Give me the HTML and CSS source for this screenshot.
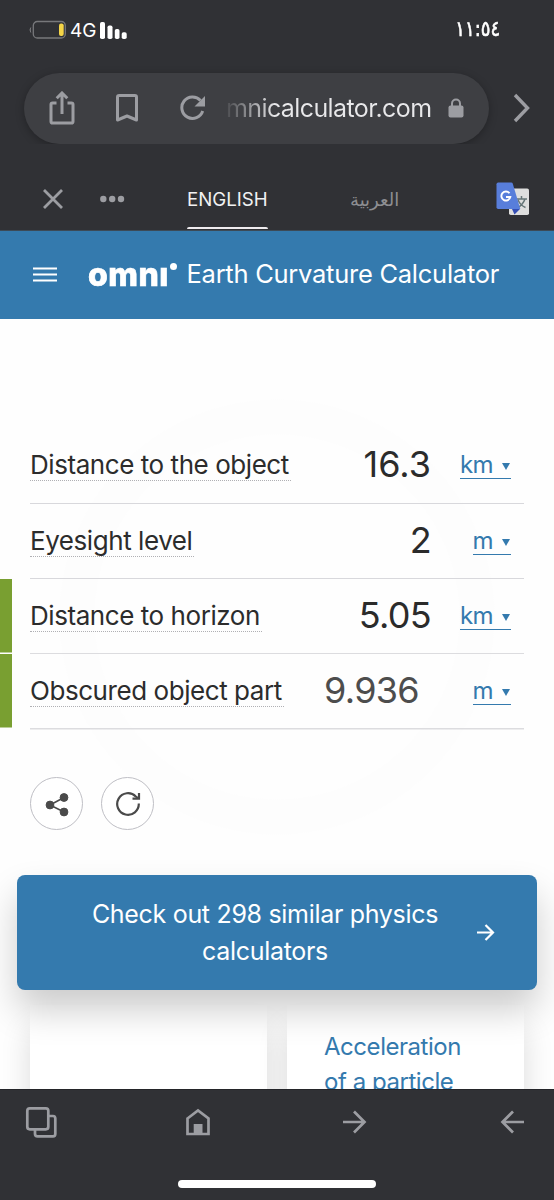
FILE: index.html
```html
<!DOCTYPE html>
<html lang="en">
<head>
<meta charset="utf-8">
<title>Earth Curvature Calculator</title>
<link rel="stylesheet" href="styles.css">
</head>
<body>
<div class="status">
  <svg class="battery" width="38" height="20" viewBox="0 0 38 20"><path d="M1.8 7.5Q.2 9.700 1.800 12.500" fill="#77787b" stroke="#77787b"/><rect x="4.300" y="1.500" width="32" height="16.500" rx="4" fill="none" stroke="#77787b" stroke-width="1.300"/><rect x="30" y="3.500" width="4.700" height="12.500" rx="2" fill="#f5d547"/></svg>
  <span class="network">4G</span>
  <svg class="signal" width="27" height="18" viewBox="0 0 27 18" fill="#fff"><rect x="0" y="0" width="5" height="17" rx="1.800"/><rect x="7.500" y="3.500" width="5" height="13.500" rx="1.800"/><rect x="14.800" y="7" width="4.700" height="10" rx="1.800"/><rect x="21.700" y="10.300" width="5" height="6.700" rx="1.800"/></svg>
  <span class="time" dir="ltr">١١:٥٤</span>
</div>
<div class="toolbar">
  <div class="pill">
    <svg class="share" width="26" height="34" viewBox="0 0 26 34" fill="none" stroke="#9c9da2" stroke-width="3"><path d="M7.500 12H3.600Q2 12 2 13.600V30.400Q2 32 3.600 32H22.400Q24 32 24 30.400V13.600Q24 12 22.400 12H18.500M13 23V3M7.700 7.300L13 2L18.300 7.300"/></svg>
    <svg class="bookmark" width="24" height="30" viewBox="0 0 24 30" fill="none" stroke="#9c9da2" stroke-width="3" stroke-linejoin="round"><path d="M2.500 27V4.200Q2.500 2.500 4.200 2.500H19.800Q21.500 2.500 21.500 4.200V27L12 23Z"/></svg>
    <svg class="reload" width="26" height="26" viewBox="0 0 26 26"><path d="M22.700 16A10.700 10.700 0 1 1 20.500 5.500" fill="none" stroke="#9c9da2" stroke-width="3"/><path d="M25 1V11.500H14.500Z" fill="#9c9da2"/></svg>
    <span class="url">mnicalculator.com</span>
    <svg class="lock" width="16" height="20" viewBox="0 0 16 20"><rect x=".5" y="7.500" width="15" height="12" rx="2" fill="#9c9da2"/><path d="M4 9V5.500a4 4 0 0 1 8 0V9" fill="none" stroke="#9c9da2" stroke-width="2"/></svg>
  </div>
  <svg class="chevron" width="20" height="32" viewBox="0 0 20 32" fill="none" stroke="#9c9da2" stroke-width="3.400"><path d="M3 3L15.500 16L3 29"/></svg>
</div>
<div class="translate">
  <svg class="close" width="22" height="22" viewBox="0 0 22 22" stroke="#9c9da2" stroke-width="2.800"><path d="M2 2L20 20M20 2L2 20"/></svg>
  <svg class="dots" width="26" height="8" viewBox="0 0 26 8" fill="#9c9da2"><circle cx="3.300" cy="4" r="3.200"/><circle cx="12.200" cy="4" r="3.200"/><circle cx="21" cy="4" r="3.200"/></svg>
  <div class="tab-active">ENGLISH<i></i></div>
  <span class="tab-arabic" dir="rtl">العربية</span>
  <svg class="google" width="34" height="34" viewBox="0 0 34 34"><rect x="13" y="6.500" width="20" height="26.500" rx="1.800" fill="#dedede"/><path d="M20 17H31M25.500 14V17M29 17Q27 23 20.500 26.500M22 18Q24.500 23.500 29.500 25.500" fill="none" stroke="#657577" stroke-width="1.500"/><path d="M16 27H24L18.500 32.500Z" fill="#354eb4"/><path d="M2.200 .5H15.200Q16.400 .5 16.800 1.800L24.300 27H2.200Q.5 27 .5 25.200V2.200Q.5 .5 2.200 .5Z" fill="#587edb"/><path d="M13.500 11.300A4.500 4.500 0 1 0 14.300 15H10" fill="none" stroke="#fff" stroke-width="1.900"/></svg>
</div>
<header class="header">
  <svg class="menu" width="24" height="16" viewBox="0 0 24 16" stroke="#fff" stroke-width="2.200"><path d="M0 1.500H24M0 7.500H24M0 13.500H24"/></svg>
  <div class="logo"><span class="logo-word">omnı</span><i class="logo-dot"></i></div>
  <span class="title">Earth Curvature Calculator</span>
</header>
<main class="page">
  <section class="calc">
    <div class="row"><span class="label l1">Distance to the object</span><span class="value v1">16.3</span><span class="unit"><u>km <i class="caret"></i></u></span></div>
    <div class="row"><span class="label l2">Eyesight level</span><span class="value v2">2</span><span class="unit"><u>m <i class="caret"></i></u></span></div>
    <div class="row changed"><span class="label l3">Distance to horizon</span><span class="value v3">5.05</span><span class="unit"><u>km <i class="caret"></i></u></span></div>
    <div class="row changed"><span class="label l4">Obscured object part</span><span class="value v4">9.936</span><span class="unit"><u>m <i class="caret"></i></u></span></div>
  </section>
  <div class="actions">
    <span class="round"><svg width="26" height="26" viewBox="0 0 26 26" fill="#4a4a4a" stroke="#4a4a4a"><path d="M20 6.500L6 14L20 21" fill="none" stroke-width="1.600"/><circle cx="6" cy="14" r="3.900"/><circle cx="20" cy="6.500" r="3.900"/><circle cx="20" cy="21" r="3.900"/></svg></span>
    <span class="round"><svg width="26" height="26" viewBox="0 0 26 26" fill="none" stroke="#4a4a4a" stroke-width="2.200"><path d="M23.800 12.500A10.800 10.800 0 1 1 20.800 5.500L23 7.200"/><path d="M24 2V7.700H17.500"/></svg></span>
  </div>
  <div class="cta"><span class="cta-text"><span>Check out 298 similar physics</span><br><span class="cta-second">calculators</span></span>
    <svg width="18" height="18" viewBox="0 0 18 18" fill="none" stroke="#fff" stroke-width="2.200"><path d="M0 8.500H16M8.500 1L16 8.500L8.500 16"/></svg></div>
  <div class="cards"><div class="card"></div><div class="card"><span class="c1">Acceleration</span><br><span class="c2">of a particle</span></div></div>
</main>
<nav class="bottom">
  <div class="nav-icons">
    <svg width="32" height="32" viewBox="0 0 32 32" fill="none" stroke="#9c9da2" stroke-width="2.700"><rect x="2.300" y="2.300" width="21" height="21" rx="2.500"/><path d="M10 23.500V28Q10 30.300 12.500 30.300H28Q30.300 30.300 30.300 28V12.500Q30.300 10 28 10H23.500"/></svg>
    <svg class="nav-home" width="26" height="28" viewBox="0 0 26 28"><path d="M2.500 10.500L13 2.500L23.500 10.500V26H2.500Z" fill="none" stroke="#9c9da2" stroke-width="2.700"/><path d="M8.700 16H17.500V26H8.700Z" fill="#9c9da2"/></svg>
    <svg class="nav-forward" width="24" height="24" viewBox="0 0 24 24" fill="none" stroke="#9c9da2" stroke-width="2.700"><path d="M0 12H22M11 1.500L21.500 12L11 22.500"/></svg>
    <svg width="24" height="24" viewBox="0 0 24 24" fill="none" stroke="#9c9da2" stroke-width="2.700"><path d="M24 12H2M13 1.500L2.500 12L13 22.500"/></svg>
  </div>
  <div class="home-indicator"></div>
</nav>
</body>
</html>
```
FILE: styles.css
```css
* { box-sizing: border-box; }
body { margin: 0; width: 554px; height: 1200px; overflow: hidden; display: flex; flex-direction: column; background: #fefefe; font-family: Inter, "Open Sans", sans-serif; white-space: nowrap; color: #2c2c2c; }
svg { display: block; flex: none; }
.status { height: 72px; flex: none; background: #303135; color: #fff; display: flex; align-items: flex-start; padding: 20px 54px 0 29px; }
.network { margin-left: 3px; font-size: 19px; line-height: 21px; width: 26px; }
.signal { margin: 2px 0 0 4px; }
.time { margin-left: auto; font: 400 21px/18px "DejaVu Sans", sans-serif; -webkit-text-stroke: .6px #fff; transform: scaleX(.86); transform-origin: 100% 50%; }
.toolbar { height: 72px; flex: none; background: #303135; display: flex; align-items: center; }
.pill { width: 465px; height: 71px; margin-left: 24px; border-radius: 36px; background: #3e3f43; display: flex; align-items: center; box-shadow: 0 2px 9px rgba(0,0,0,.28); }
.share { margin-left: 25px; }
.bookmark { margin-left: 40px; }
.reload { margin-left: 41px; }
.url { margin-left: 20px; width: 206px; font-size: 25px; letter-spacing: -.6px; background: linear-gradient(90deg, #4a4b4f, #e8e8ea 24%); -webkit-background-clip: text; color: transparent; }
.lock { margin-left: 16px; }
.chevron { margin-left: 23px; }
.translate { height: 87px; flex: none; background: #303135; display: flex; align-items: center; padding: 24px 24px 0 42px; border-bottom: 1px solid #3c4a57; }
.dots { margin-left: 36px; }
.tab-active { align-self: stretch; width: 81px; margin-left: 61px; padding-bottom: 1px; color: #f1f1f2; font-size: 18.700px; line-height: 63px; display: flex; flex-direction: column; }
.tab-active i { height: 3px; margin-top: -4px; border-radius: 2px 2px 0 0; background: #eeebee; }
.tab-arabic { margin-left: 82px; color: #8d8e92; font: 18px/28px "Noto Sans", "DejaVu Sans", sans-serif; }
.google { margin-left: auto; }
.header { height: 88px; flex: none; background: #347aae; display: flex; align-items: center; padding-left: 33px; color: #fff; }
.logo { width: 91px; height: 40px; margin-left: 31px; display: flex; align-items: flex-start; }
.logo-word { width: 80px; font-size: 33px; line-height: 38px; font-weight: 800; letter-spacing: .5px; -webkit-text-stroke: .7px #fff; transform: scaleX(.97); transform-origin: 0 0; }
.logo-dot { width: 7px; height: 7px; border-radius: 50%; background: #fff; margin: 8px 0 0 2px; }
.title { margin-left: 7.500px; font-size: 25.500px; line-height: 30px; letter-spacing: -.26px; padding-bottom: 2px; }
.page { flex: 1; min-height: 0; overflow: hidden; padding-top: 109px; background: radial-gradient(circle at 277px 298px, #fefefe 0 182px, #fdfdfd 183px 217px, #fefefe 218px); }
.row { height: 75.400px; margin: 0 30px; border-bottom: 1.500px solid #d8d8dc; display: flex; align-items: center; }
.calc { padding-top: .3px; }
.changed { margin-left: 0; border-bottom: 0; background: linear-gradient(#dcdcdf, #dcdcdf) 30px 100% / 494px 1.500px no-repeat, linear-gradient(#799f31, #799f31) 0 0 / 12px 73.500px no-repeat; padding: 0 0 2px 30px; }
.label { font-size: 26px; line-height: 31px; letter-spacing: -.44px; border-bottom: 1.500px dotted #b0b0b4; padding: 0 2px 0 0; }
.value { margin: -2px 0 0 auto; font-size: 36px; letter-spacing: -.7px; color: #2b2b2b; }
.v1 { letter-spacing: 0; }
.v4 { color: #4d4d4d; padding-right: 12px; }
.unit { width: 93px; padding: 1px 13px 0 0; display: flex; justify-content: flex-end; font-size: 24px; letter-spacing: -.6px; line-height: 26px; color: #347aae; }
.unit u { display: flex; text-decoration: none; border-bottom: 1.500px solid #347aae; height: 27px; }
.caret { border: 4px solid transparent; border-top: 7px solid #347aae; border-bottom: 0; margin: 11px 1px 0 9px; height: 0; }
.actions { display: flex; gap: 18px; padding: 47.200px 0 0 30px; }
.round { width: 53px; height: 53px; border: 1.500px solid #bfbfc5; border-radius: 50%; display: flex; align-items: center; justify-content: center; background: #fff; }
.cta { position: relative; z-index: 1; width: 520px; height: 115px; margin: 45px 0 0 17px; border-radius: 8px; background: #347aae; color: #fff; display: flex; align-items: center; box-shadow: 0 20px 36px rgba(0,0,0,.2); }
.cta-text { width: 380px; margin-left: 58px; text-align: center; font-size: 25px; line-height: 37px; letter-spacing: -.31px; }
.cta svg { margin-left: 22px; }
.cards { display: flex; gap: 20px; padding: 15px 30px 0; }
.card { width: 237px; height: 160px; background: #fff; box-shadow: 0 24px 28px rgba(0,0,0,.14); padding: 24px 37px; font-size: 24px; line-height: 35px; letter-spacing: -.46px; color: #347aae; }
.bottom { height: 111px; flex: none; background: #303135; border-top: 1px solid #242529; position: relative; z-index: 2; }
.nav-icons { display: flex; justify-content: space-between; align-items: center; padding: 16px 30px 0 25px; }
.nav-home { margin-left: -5px; }
.nav-forward { margin-left: 0; }
.home-indicator { width: 198px; height: 8px; border-radius: 4px; background: #fff; margin: 42px 0 0 178px; }
```
